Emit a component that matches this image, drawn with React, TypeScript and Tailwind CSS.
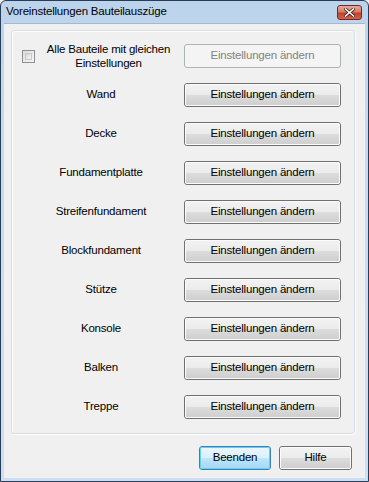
import React from "react";

const rows = [
  "Wand",
  "Decke",
  "Fundamentplatte",
  "Streifenfundament",
  "Blockfundament",
  "Stütze",
  "Konsole",
  "Balken",
  "Treppe",
];

function Btn({ children, disabled, primary, className = "" }: { children: React.ReactNode; disabled?: boolean; primary?: boolean; className?: string }) {
  if (disabled) {
    return (
      <div className={`h-[24px] rounded-[3px] border border-[#adb2b5] bg-[#f4f4f4] flex items-center justify-center text-[#838383] ${className}`}>
        {children}
      </div>
    );
  }
  if (primary) {
    return (
      <div className={`h-[24px] rounded-[3px] border border-[#3c7fb1] ${className}`}>
        <div className="h-full w-full rounded-[2px] border border-[#63d0f7] bg-[linear-gradient(to_bottom,#eaf6fd_0%,#d9f0fc_50%,#bee6fd_50%,#a7d9f5_100%)] flex items-center justify-center text-black">
          {children}
        </div>
      </div>
    );
  }
  return (
    <div className={`h-[24px] rounded-[3px] border border-[#707070] ${className}`}>
      <div className="h-full w-full rounded-[2px] border border-[#fbfbfb] bg-[linear-gradient(to_bottom,#f2f2f2_0%,#ebebeb_50%,#dddddd_50%,#cfcfcf_100%)] flex items-center justify-center text-black">
        {children}
      </div>
    </div>
  );
}

export default function App() {
  return (
    <div
      className="w-[369px] h-[482px] bg-[#f0f0f0] text-[11.5px] tracking-[-0.2px] text-black relative overflow-hidden"
      style={{ fontFamily: '"Liberation Sans", Arial, sans-serif' }}
    >
      <div className="absolute inset-0 rounded-t-[6px] border border-[#2a3c57] bg-[linear-gradient(to_bottom,#bcd3ec_0%,#c7dbf0_30%,#cddff2_100%)]" />
      <div className="relative flex flex-col h-full">
        {/* title bar */}
        <div className="h-[23px] flex items-center pl-[6px] pr-[7px]">
          <span className="flex-1 text-[11.5px] leading-none mt-[1px]">Voreinstellungen Bauteilauszüge</span>
          <div className="w-[25px] h-[15px] mt-[1px] rounded-[3px] border border-[#6d2b28] bg-[linear-gradient(to_bottom,#e9a99a_0%,#d77b68_45%,#c0422c_55%,#d5614a_100%)] flex items-center justify-center">
            <svg width="11" height="9" viewBox="0 0 11 9">
              <path d="M1.5 1 L9.5 8 M9.5 1 L1.5 8" stroke="#3a1a16" strokeWidth="3" strokeLinecap="square" />
              <path d="M1.5 1 L9.5 8 M9.5 1 L1.5 8" stroke="#ffffff" strokeWidth="1.6" strokeLinecap="square" />
            </svg>
          </div>
        </div>
        {/* client */}
        <div className="flex-1 mx-[4px] mb-[4px] bg-[#f0f0f0] border-t border-[#a5b8ce] flex flex-col pt-[6px] pl-[7px] pr-[10px]">
          <div className="h-[404px] rounded-[3px] border border-[#d5dfe5] shadow-[inset_1px_1px_0_#ffffff,1px_1px_0_#ffffff] flex flex-col pt-[13px]">
            <div className="flex items-center h-[24px]">
              <div className="ml-[10px] w-[13px] h-[13px] border border-[#8f8f8f] bg-[linear-gradient(135deg,#dcdcdc,#f7f7f7)] p-[2px]">
                <div className="w-full h-full border border-[#c8c8c8] bg-[linear-gradient(135deg,#d8d8d8,#f6f6f6)]" />
              </div>
              <div className="w-[147px] text-center leading-[14px]">
                Alle Bauteile mit gleichen
                <br />
                Einstellungen
              </div>
              <Btn disabled className="w-[157px] ml-[2px]">Einstellungen ändern</Btn>
            </div>
            {rows.map((r) => (
              <div key={r} className="flex items-center h-[24px] mt-[15px]">
                <div className="w-[174px] text-center pl-[4px]">{r}</div>
                <Btn className="w-[157px] ml-[-2px]">Einstellungen ändern</Btn>
              </div>
            ))}
          </div>
          <div className="flex justify-end gap-[8px] mt-[12px] pr-[3px]">
            <Btn primary className="w-[72px]">Beenden</Btn>
            <Btn className="w-[73px]">Hilfe</Btn>
          </div>
        </div>
      </div>
    </div>
  );
}
